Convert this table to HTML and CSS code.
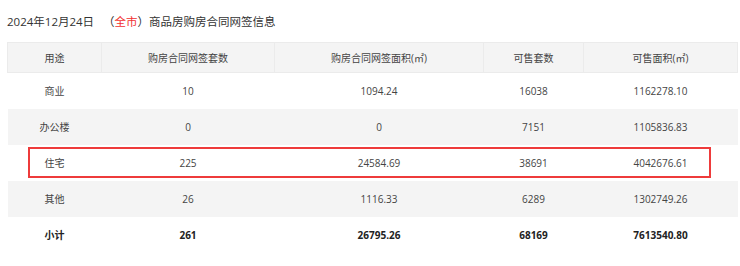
FILE: index.html
```html
<!DOCTYPE html>
<html lang="zh-CN">
<head>
<meta charset="utf-8">
<link rel="stylesheet" href="styles.css">
</head>
<body>
<div class="page">
  <div class="title">2024年12月24日&nbsp;&nbsp;&nbsp;（<span class="city">全市</span>）商品房购房合同网签信息</div>
  <div class="table-wrap">
    <table class="data">
      <colgroup>
        <col class="c1"><col class="c2"><col class="c3"><col class="c4"><col class="c5">
      </colgroup>
      <thead>
        <tr><th>用途</th><th>购房合同网签套数</th><th>购房合同网签面积(㎡)</th><th>可售套数</th><th>可售面积(㎡)</th></tr>
      </thead>
      <tbody>
        <tr><td>商业</td><td>10</td><td>1094.24</td><td>16038</td><td>1162278.10</td></tr>
        <tr class="alt"><td>办公楼</td><td>0</td><td>0</td><td>7151</td><td>1105836.83</td></tr>
        <tr><td>住宅</td><td>225</td><td>24584.69</td><td>38691</td><td>4042676.61</td></tr>
        <tr class="alt"><td>其他</td><td>26</td><td>1116.33</td><td>6289</td><td>1302749.26</td></tr>
        <tr class="total"><td>小计</td><td>261</td><td>26795.26</td><td>68169</td><td>7613540.80</td></tr>
      </tbody>
    </table>
    <div class="highlight"></div>
  </div>
</div>
</body>
</html>
```
FILE: styles.css
```css
* { box-sizing: border-box; }
html, body { margin: 0; padding: 0; background: #fff; }
body {
  font-family: "Open Sans", "Noto Sans CJK SC", sans-serif;
  color: #333;
}
.page { padding: 14px 7px 0 7px; width: 740px; }
.title {
  font-size: 11.5px;
  line-height: 16px;
  color: #333;
  height: 28px;
}
.city { color: #f23030; }
.table-wrap { position: relative; width: 730px; }
.data {
  width: 730px;
  border-collapse: collapse;
  table-layout: fixed;
  font-size: 10px;
}
.c1 { width: 94px; }
.c2 { width: 173px; }
.c3 { width: 209px; }
.c4 { width: 100px; }
.c5 { width: 154px; }
.data th {
  background: #f4f4f4;
  border: 1px solid #ebebeb;
  font-weight: normal;
  color: #444;
  height: 30px;
  padding: 0;
  text-align: center;
}
.data td {
  height: 36px;
  padding: 0;
  text-align: center;
  color: #444;
}
.data tr.alt td { background: #f4f4f4; }
.data tr.total td { font-weight: bold; color: #222; }
.highlight {
  position: absolute;
  left: 21px;
  top: 105px;
  width: 683px;
  height: 31px;
  border: 2px solid #ee3b3b;
}
```
